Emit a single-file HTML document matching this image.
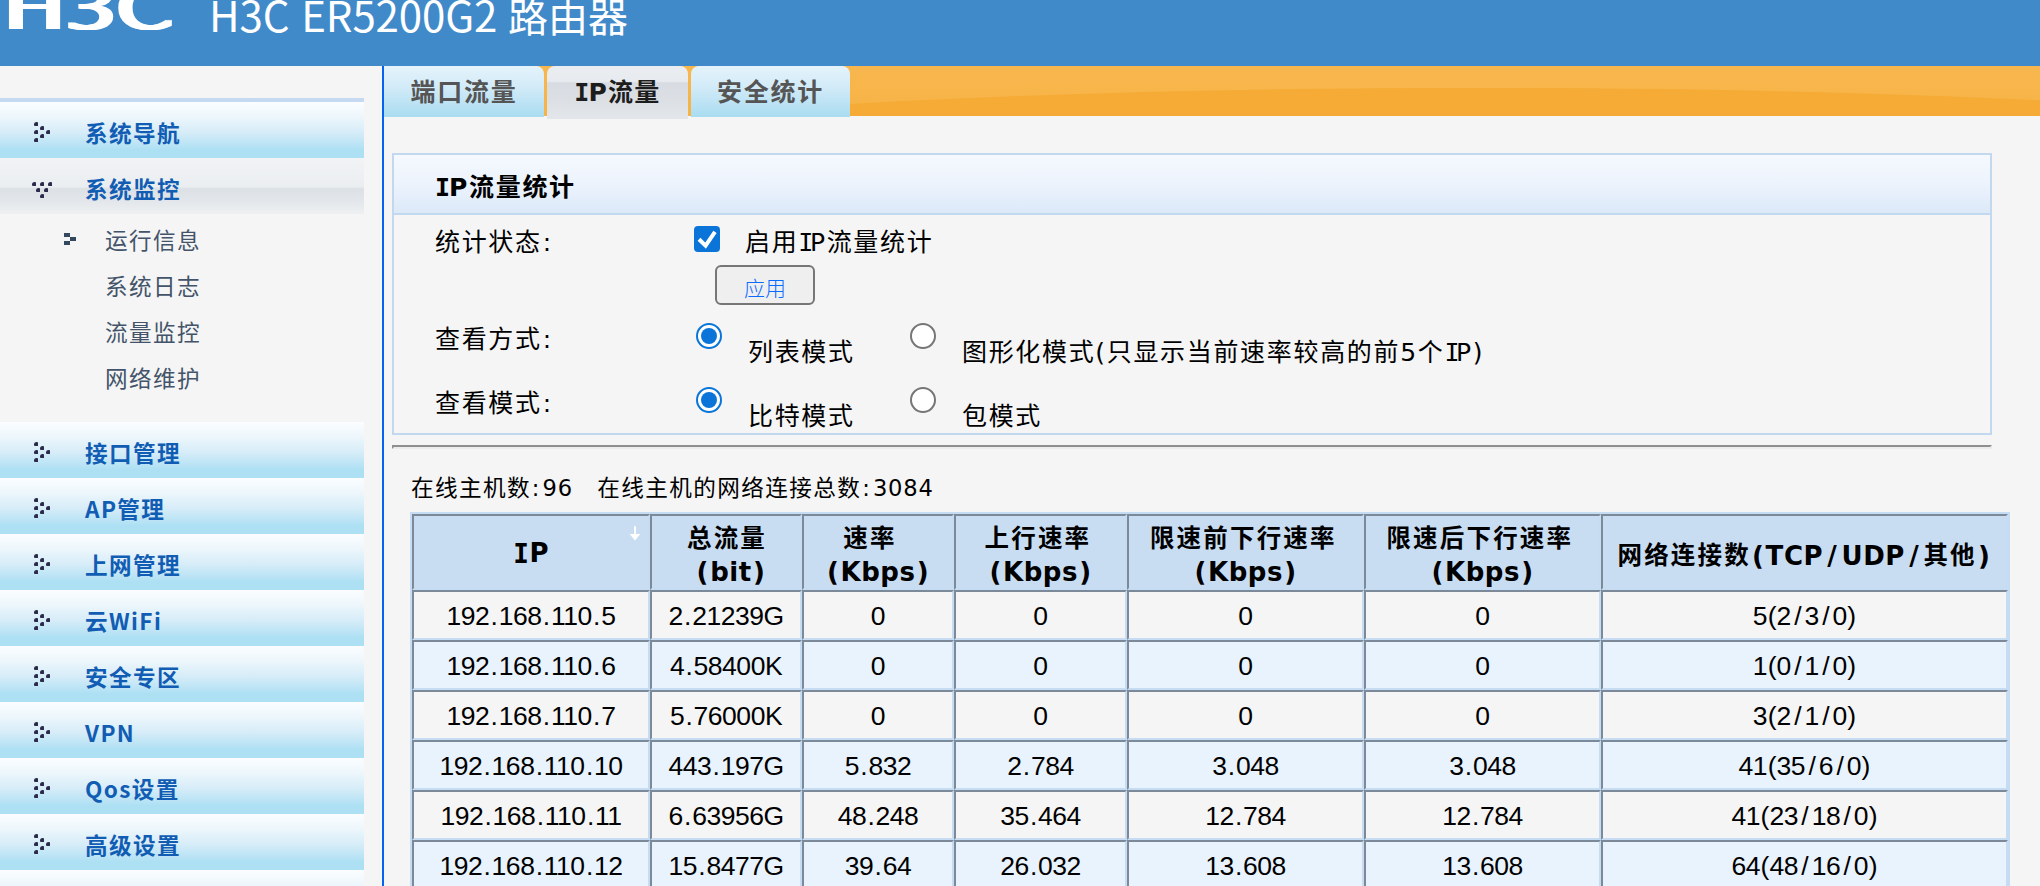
<!DOCTYPE html>
<html lang="zh-CN">
<head>
<meta charset="utf-8">
<title>H3C ER5200G2 路由器</title>
<style>
*{box-sizing:border-box;margin:0;padding:0}
html,body{width:2040px;height:886px;overflow:hidden;background:#f5f5f5}
body{position:relative;font-family:"DejaVu Sans","Noto Sans CJK SC",sans-serif;color:#000}
.abs{position:absolute}
/* header */
#hdr{left:0;top:0;width:2040px;height:66px;background:#418aca;overflow:hidden}
#logo{left:1px;top:-20px;font-family:"DejaVu Sans","Liberation Sans",sans-serif;font-weight:normal;font-size:58px;line-height:58px;color:#fff;white-space:nowrap;transform-origin:0 0;transform:scaleX(1.40);letter-spacing:0px;text-shadow:1px 0 #fff,2px 0 #fff,3px 0 #fff,4.2px 0 #fff}
#title .lat{font-size:42px;margin-right:-1px;word-spacing:2.5px;letter-spacing:-.1px}
#title{left:209px;top:-15px;font-family:"Noto Sans CJK SC","Liberation Sans",sans-serif;font-weight:400;font-size:40px;line-height:58px;color:#fff;white-space:nowrap}
/* sidebar */
#sideline{left:0;top:98px;width:364px;height:4px;background:#c5daf0}
.nav{left:0;width:364px;height:56px;background:linear-gradient(#fbfdff 0%,#eef7fc 25%,#d6ecf8 55%,#aee0f4 85%,#aee0f4 100%)}
.nav.open{background:linear-gradient(#f1f3f5 0%,#ebeef1 51%,#dce1e6 55%,#e2e6ea 75%,#eef0f1 100%)}
.nav span{position:absolute;left:85px;top:13px;font-family:"Noto Sans CJK SC","Liberation Sans",sans-serif;font-weight:bold;font-size:22.6px;letter-spacing:1.4px;line-height:36px;color:#115db3;white-space:nowrap}
.nav i{position:absolute;width:4px;height:4px;background:#2b2b4b;border-radius:2.5px 1px 0.5px 1px}
.sub{left:105px;font-family:"Noto Sans CJK SC","Liberation Sans",sans-serif;font-size:22.6px;letter-spacing:1.4px;line-height:36px;color:#43546a;white-space:nowrap}
.sq{background:#33475e;width:6px;height:4px}
#vline{left:382px;top:66px;width:2px;height:820px;background:#0563f2}
/* tabs */
#obar{left:384px;top:66px;width:1656px;height:50px;background:linear-gradient(#f8b74e,#f6b346);overflow:hidden}
#obar:before{content:"";position:absolute;left:96px;top:22px;width:2000px;height:143px;border-radius:50%;background:#f5ab35}
.tab{top:66px;height:51px;border-radius:8px 8px 0 0;background:linear-gradient(#e4f3fb 0%,#d3ebf8 40%,#a9dcf1 100%);font-family:"Noto Sans CJK SC","DejaVu Sans",sans-serif;font-weight:bold;font-size:25px;letter-spacing:1.8px;line-height:48px;color:#555;text-align:center;white-space:nowrap}
.tab.act{height:53px;line-height:54px;letter-spacing:1.3px;background:linear-gradient(#ebeef1 0%,#e7eaee 29%,#d8dce2 32%,#dbdfe4 60%,#e3e6ea 100%);color:#1d1d1d;font-family:"DejaVu Sans","Noto Sans CJK SC",sans-serif}
/* panel */
#panel{left:392px;top:153px;width:1600px;height:282px;border:2px solid #c2d8ee}
#phead{left:394px;top:155px;width:1596px;height:60px;border-bottom:2px solid #c2d8ee;background:linear-gradient(#f5f9fe 0%,#eef4fd 45%,#dce9f9 100%)}
.t26{font-size:25px;letter-spacing:1.67px;line-height:36px;white-space:nowrap}
.cb{left:694px;top:226px;width:26px;height:26px;border-radius:4px;background:#0a74d8}
.rd{width:26px;height:26px;border-radius:50%;border:2px solid #767676;background:#fff}
.rd.on{border-color:#0a74d8}
.rd.on:after{content:"";position:absolute;left:3px;top:3px;width:16px;height:16px;border-radius:50%;background:#0a74d8}
#btn{left:715px;top:265px;width:100px;height:40px;border:2px solid #767676;border-radius:6px;background:#efefef;color:#0a6cff;font-weight:300;font-size:21px;line-height:40px;text-align:center;font-family:"Noto Sans CJK SC",sans-serif}
#hr{left:392px;top:445px;width:1600px;height:4px;border-top:2px solid #8f8f8f;border-left:2px solid #8f8f8f;border-right:2px solid #e8e8e8;border-bottom:2px solid #ececec}
#info{left:411px;top:470px;font-size:22.6px;letter-spacing:1.4px;word-spacing:-.45px;line-height:36px;white-space:pre}
#info b{font-weight:normal;letter-spacing:.8px}
/* table */
#tb{left:410px;top:512px;width:1600px;border-collapse:separate;border-spacing:0;border:2px solid #c6dcf3;table-layout:fixed;font-family:"Liberation Sans","Noto Sans CJK SC",sans-serif}
#tb td,#tb th{border-style:solid;border-width:2px;border-color:#7b8998 #c6dcf3 #c6dcf3 #7b8998;text-align:center;vertical-align:middle;white-space:nowrap;overflow:hidden;padding:0}
#tb th{height:76px;background:#c9ddf2;font-family:"DejaVu Sans","Noto Sans CJK SC",sans-serif;font-weight:bold;font-size:24.5px;letter-spacing:2.17px;line-height:33px;position:relative;vertical-align:top;padding-top:6px}
#tb th.s1{padding-top:20.5px;font-size:26px;letter-spacing:0}
#tb th.s2{padding-top:22.5px}
#tb th span{font-size:26px}
#tb th b{position:relative;top:0px;font-weight:bold}#tb th span{position:relative;top:1px;letter-spacing:.55px}#tb th u{text-decoration:none;padding:0 1.15px}#tb th i{font-style:normal;padding:0 4.2px}
#tb td{height:50px;font-size:26.5px;line-height:40px;padding-top:2px;background:#f5f5f5;letter-spacing:-.48px;padding-bottom:0}
#tb td i{font-style:normal}
#tb td i.s{padding:0 3.4px}#tb td i.d{padding:0 1.28px}#tb td i.q{padding:0 .56px}
#tb tr.e td{background:#e9f3fd}
.I{font-family:"DejaVu Sans Mono",monospace;letter-spacing:-1px}
.Ir{letter-spacing:-3.5px}
.c{margin-left:.04em;margin-right:.077em}
</style>
</head>
<body>
<div id="hdr" class="abs">
  <div id="logo" class="abs">H3C</div>
  <div id="title" class="abs"><span class="lat">H3C ER5200G2 </span>路由器</div>
</div>

<div id="sideline" class="abs"></div>
<div class="abs nav" style="top:102px"><i style="left:34px;top:20px"></i><i style="left:40px;top:24px"></i><i style="left:34px;top:28px"></i><i style="left:46px;top:28px"></i><i style="left:40px;top:32px"></i><i style="left:34px;top:36px"></i><span>系统导航</span></div>
<div class="abs nav open" style="top:158px"><i style="left:32px;top:24px"></i><i style="left:40px;top:24px"></i><i style="left:48px;top:24px"></i><i style="left:36px;top:30px"></i><i style="left:44px;top:30px"></i><i style="left:40px;top:36px"></i><span>系统监控</span></div>
<div class="abs sq" style="left:64px;top:233px"></div><div class="abs sq" style="left:70px;top:237px"></div><div class="abs sq" style="left:64px;top:241px"></div>
<div class="abs sub" style="top:222px">运行信息</div>
<div class="abs sub" style="top:268px">系统日志</div>
<div class="abs sub" style="top:314px">流量监控</div>
<div class="abs sub" style="top:360px">网络维护</div>
<div class="abs nav" style="top:422px"><i style="left:34px;top:20px"></i><i style="left:40px;top:24px"></i><i style="left:34px;top:28px"></i><i style="left:46px;top:28px"></i><i style="left:40px;top:32px"></i><i style="left:34px;top:36px"></i><span>接口管理</span></div>
<div class="abs nav" style="top:478px"><i style="left:34px;top:20px"></i><i style="left:40px;top:24px"></i><i style="left:34px;top:28px"></i><i style="left:46px;top:28px"></i><i style="left:40px;top:32px"></i><i style="left:34px;top:36px"></i><span>AP管理</span></div>
<div class="abs nav" style="top:534px"><i style="left:34px;top:20px"></i><i style="left:40px;top:24px"></i><i style="left:34px;top:28px"></i><i style="left:46px;top:28px"></i><i style="left:40px;top:32px"></i><i style="left:34px;top:36px"></i><span>上网管理</span></div>
<div class="abs nav" style="top:590px"><i style="left:34px;top:20px"></i><i style="left:40px;top:24px"></i><i style="left:34px;top:28px"></i><i style="left:46px;top:28px"></i><i style="left:40px;top:32px"></i><i style="left:34px;top:36px"></i><span>云WiFi</span></div>
<div class="abs nav" style="top:646px"><i style="left:34px;top:20px"></i><i style="left:40px;top:24px"></i><i style="left:34px;top:28px"></i><i style="left:46px;top:28px"></i><i style="left:40px;top:32px"></i><i style="left:34px;top:36px"></i><span>安全专区</span></div>
<div class="abs nav" style="top:702px"><i style="left:34px;top:20px"></i><i style="left:40px;top:24px"></i><i style="left:34px;top:28px"></i><i style="left:46px;top:28px"></i><i style="left:40px;top:32px"></i><i style="left:34px;top:36px"></i><span>VPN</span></div>
<div class="abs nav" style="top:758px"><i style="left:34px;top:20px"></i><i style="left:40px;top:24px"></i><i style="left:34px;top:28px"></i><i style="left:46px;top:28px"></i><i style="left:40px;top:32px"></i><i style="left:34px;top:36px"></i><span>Qos设置</span></div>
<div class="abs nav" style="top:814px"><i style="left:34px;top:20px"></i><i style="left:40px;top:24px"></i><i style="left:34px;top:28px"></i><i style="left:46px;top:28px"></i><i style="left:40px;top:32px"></i><i style="left:34px;top:36px"></i><span>高级设置</span></div>
<div class="abs nav" style="top:870px"></div>

<div id="vline" class="abs"></div>

<div id="obar" class="abs"></div>
<div class="abs tab" style="left:384px;width:160px;border-top-left-radius:0">端口流量</div>
<div class="abs tab act" style="left:547px;width:141px"><span class="I">I</span>P流量</div>
<div class="abs tab" style="left:691px;width:159px">安全统计</div>

<div id="panel" class="abs"></div>
<div id="phead" class="abs"></div>
<div class="abs t26" style="left:435px;top:169.5px;font-weight:bold"><span class="I">I</span>P流量统计</div>
<div class="abs t26" style="left:435px;top:225.0px">统计状态<span class="c">:</span></div>
<div class="abs cb"><svg width="26" height="26" viewBox="0 0 26 26"><path d="M5 13.2 L11.6 19.6 L21 5.8" fill="none" stroke="#fff" stroke-width="4" stroke-linecap="butt" stroke-linejoin="miter"/></svg></div>
<div class="abs t26" style="left:745px;top:225.0px">启用<span class="I Ir">I</span>P流量统计</div>
<div id="btn" class="abs">应用</div>
<div class="abs t26" style="left:435px;top:322.0px">查看方式<span class="c">:</span></div>
<div class="abs rd on" style="left:696px;top:323px"></div>
<div class="abs t26" style="left:748px;top:334.5px">列表模式</div>
<div class="abs rd" style="left:910px;top:323px"></div>
<div class="abs t26" style="left:962px;top:334.5px">图形化模式(只显示当前速率较高的前5个<span class="I Ir">I</span>P)</div>
<div class="abs t26" style="left:435px;top:386.0px">查看模式<span class="c">:</span></div>
<div class="abs rd on" style="left:696px;top:387px"></div>
<div class="abs t26" style="left:748px;top:398.5px">比特模式</div>
<div class="abs rd" style="left:910px;top:387px"></div>
<div class="abs t26" style="left:962px;top:398.5px">包模式</div>

<div id="hr" class="abs"></div>
<div id="info" class="abs">在线主机数<span class="c">:</span><b>96</b>   在线主机的网络连接总数<span class="c">:</span><b>3084</b></div>

<table id="tb" class="abs">
<colgroup><col style="width:238px"><col style="width:152px"><col style="width:152px"><col style="width:173px"><col style="width:237px"><col style="width:237px"><col style="width:407px"></colgroup>
<tr><th class="s1"><span class="I">I</span>P<svg style="position:absolute;left:215px;top:10px" width="12" height="16" viewBox="0 0 12 16"><path d="M5 0.3 H7 V8 H11.3 L6 14.6 L0.7 8 H5 Z" fill="#fff"/></svg></th><th><b style="left:1px">总流量</b><br><span class="l1" style="left:5px"><u>(</u>bit<u>)</u></span></th><th><b style="left:-8px">速率</b><br><span class="l2"><u>(</u>Kbps<u>)</u></span></th><th><b style="left:-2.6px">上行速率</b><br><span class="l2"><u>(</u>Kbps<u>)</u></span></th><th><b style="left:-2.2px">限速前下行速率</b><br><span class="l2"><u>(</u>Kbps<u>)</u></span></th><th><b style="left:-2.7px">限速后下行速率</b><br><span class="l2"><u>(</u>Kbps<u>)</u></span></th><th class="s2">网络连接数<span class="l3"><u>(</u>TCP<i>/</i>UDP<i>/</i></span>其他<span class="l3"><u>)</u></span></th></tr>
<tr><td>192<i class="d">.</i>168<i class="d">.</i>110<i class="d">.</i>5</td><td>2<i class="d">.</i>21239G</td><td>0</td><td>0</td><td>0</td><td>0</td><td>5<i class="q">(</i>2<i class="s">/</i>3<i class="s">/</i>0<i class="q">)</i></td></tr>
<tr class="e"><td>192<i class="d">.</i>168<i class="d">.</i>110<i class="d">.</i>6</td><td>4<i class="d">.</i>58400K</td><td>0</td><td>0</td><td>0</td><td>0</td><td>1<i class="q">(</i>0<i class="s">/</i>1<i class="s">/</i>0<i class="q">)</i></td></tr>
<tr><td>192<i class="d">.</i>168<i class="d">.</i>110<i class="d">.</i>7</td><td>5<i class="d">.</i>76000K</td><td>0</td><td>0</td><td>0</td><td>0</td><td>3<i class="q">(</i>2<i class="s">/</i>1<i class="s">/</i>0<i class="q">)</i></td></tr>
<tr class="e"><td>192<i class="d">.</i>168<i class="d">.</i>110<i class="d">.</i>10</td><td>443<i class="d">.</i>197G</td><td>5<i class="d">.</i>832</td><td>2<i class="d">.</i>784</td><td>3<i class="d">.</i>048</td><td>3<i class="d">.</i>048</td><td>41<i class="q">(</i>35<i class="s">/</i>6<i class="s">/</i>0<i class="q">)</i></td></tr>
<tr><td>192<i class="d">.</i>168<i class="d">.</i>110<i class="d">.</i>11</td><td>6<i class="d">.</i>63956G</td><td>48<i class="d">.</i>248</td><td>35<i class="d">.</i>464</td><td>12<i class="d">.</i>784</td><td>12<i class="d">.</i>784</td><td>41<i class="q">(</i>23<i class="s">/</i>18<i class="s">/</i>0<i class="q">)</i></td></tr>
<tr class="e"><td>192<i class="d">.</i>168<i class="d">.</i>110<i class="d">.</i>12</td><td>15<i class="d">.</i>8477G</td><td>39<i class="d">.</i>64</td><td>26<i class="d">.</i>032</td><td>13<i class="d">.</i>608</td><td>13<i class="d">.</i>608</td><td>64<i class="q">(</i>48<i class="s">/</i>16<i class="s">/</i>0<i class="q">)</i></td></tr>
</table>
</body>
</html>
